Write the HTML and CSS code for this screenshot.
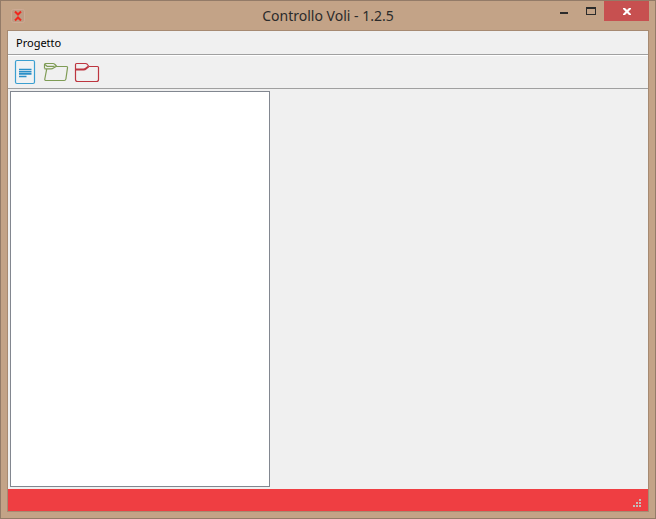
FILE: index.html
```html
<!DOCTYPE html>
<html lang="it">
<head>
<meta charset="utf-8">
<title>Controllo Voli - 1.2.5</title>
<link rel="stylesheet" href="styles.css">
</head>
<body>
<div class="window">
  <header class="titlebar">
    <svg class="app-icon" width="14" height="14" viewBox="0 0 14 14" aria-hidden="true">
      <rect x=".5" y=".5" width="13" height="13" rx="2" fill="#bd9c84" stroke="#cdaa94"/>
      <path d="M4 2.500 L7 5.500 L10 2.500 M4 11.500 L7 8.500 L10 11.500" fill="none" stroke="#f0281e" stroke-width="2"/>
    </svg>
    <h1 class="title">Controllo Voli - 1.2.5</h1>
    <div class="controls">
      <button class="control" aria-label="Minimize"><svg width="10" height="8" viewBox="0 0 10 8"><path d="M1 5H9V7H1Z" fill="#2b2b2b"/></svg></button>
      <button class="control" aria-label="Maximize"><svg width="10" height="8" viewBox="0 0 10 8"><path d="M0 0H10V8H0ZM1 2V7H9V2Z" fill="#2b2b2b" fill-rule="evenodd"/></svg></button>
      <button class="control close" aria-label="Close"><svg width="8" height="7" viewBox="0 0 8 7"><path d="M0 0H2L4 2L6 0H8V1L5.500 3.500L8 6V7H6L4 5L2 7H0V6L2.500 3.500L0 1Z" fill="#fff"/></svg></button>
    </div>
  </header>
  <div class="client">
    <nav class="menubar"><button class="menu">Progetto</button></nav>
    <div class="toolbar">
      <button class="tool" aria-label="Nuovo progetto">
        <svg width="26" height="26" viewBox="0 0 26 26">
          <rect x="3.500" y="1.500" width="19" height="23" rx="1.500" fill="#f0f2f3" stroke="#3b9fd0" stroke-width="1.200"/>
          <path d="M7 10.500H19.500M7 12.700H19.500M7 14.900H19.500M7 17.500H14.500" stroke="#2b90c8" stroke-width="1.600"/>
        </svg>
      </button>
      <button class="tool" aria-label="Apri progetto">
        <svg width="26" height="26" viewBox="0 0 26 26" fill="none" stroke="#7f9c55" stroke-width="1.200" stroke-linejoin="round">
          <path d="M1.500 9.500 V5.500 Q1.500 4.500 2.500 4.500 H10 Q11 4.500 12 5.500 L13.800 7.500 H23.500 Q24.700 7.500 24.500 8.800 L22.900 20 Q22.600 21.500 21.200 21.500 H3.200 Q1.500 21.500 1.800 20 L3.700 10.200"/>
          <path d="M1.500 9.800 H8 Q9.500 9.800 10.500 9 L13.500 7.300 M2 5.500 L4 7.300 H11.500" />
        </svg>
      </button>
      <button class="tool" aria-label="Chiudi progetto">
        <svg width="26" height="26" viewBox="0 0 26 26" fill="none" stroke="#bd3640" stroke-width="1.200" stroke-linejoin="round">
          <path d="M1.500 10.500 V5.500 Q1.500 4.500 2.500 4.500 H11.500 Q12.500 4.500 13 5 L15 7.500 H23.500 Q24.500 7.500 24.500 8.500 V20.500 Q24.500 22.500 22.500 22.500 H3.500 Q1.500 22.500 1.500 20.500 Z"/>
          <path d="M1.500 10.500 H9.500 Q11 10.500 12 9.500 L14.500 7.500" stroke-width="2"/>
        </svg>
      </button>
    </div>
    <main class="workspace"><section class="list" aria-label="Voli"></section></main>
    <footer class="status">
      <svg width="8" height="8" viewBox="0 0 8 8" aria-hidden="true"><path d="M6 0H8V2H6ZM3 3H5V5H3ZM6 3H8V5H6ZM0 6H2V8H0ZM3 6H5V8H3ZM6 6H8V8H6Z" fill="#c3bcb9"/></svg>
    </footer>
  </div>
</div>
</body>
</html>
```
FILE: styles.css
```css
* { box-sizing: border-box; }
body { margin: 0; font-family: "Noto Sans", sans-serif; color: #000; }
button { margin: 0; padding: 0; border: 0; background: none; font: inherit; color: inherit; }
svg { display: block; }

.window {
  min-height: 100vh;
  display: flex;
  flex-direction: column;
  padding: 0 6px 6px;
  border: 1px solid #937b68;
  background: #c3a387;
}
.titlebar {
  height: 29px;
  display: grid;
  grid-template-columns: 1fr auto 1fr;
  align-items: center;
}
.app-icon { margin-left: 4px; }
.title { margin: 0; font-size: 14px; line-height: 28px; font-weight: 400; color: #2b2b2b; }
.controls { align-self: start; justify-self: end; display: flex; }
.control { width: 27px; height: 20px; display: grid; place-items: center; }
.close { width: 45px; background: #c75050; }

.client {
  flex: 1;
  display: flex;
  flex-direction: column;
  border: 1px solid #a68a72;
  background: #f0f0f0;
}
.menubar { height: 24px; display: flex; border-bottom: 1px solid #a0a0a0; }
.menu { padding: 0 8px; font-size: 11px; line-height: 22px; }
.toolbar {
  height: 34px;
  display: flex;
  align-items: center;
  gap: 5px;
  padding: 0 4px;
  border-top: 1px solid #fff;
  border-bottom: 1px solid #a0a0a0;
}
.workspace { flex: 1; display: flex; padding: 2px; }
.list { flex: 0 0 260px; border: 1px solid #828790; background: #fff; }
.status {
  height: 22px;
  display: flex;
  align-items: flex-end;
  justify-content: flex-end;
  padding: 4px 7px;
  background: #ef3e42;
}
```
